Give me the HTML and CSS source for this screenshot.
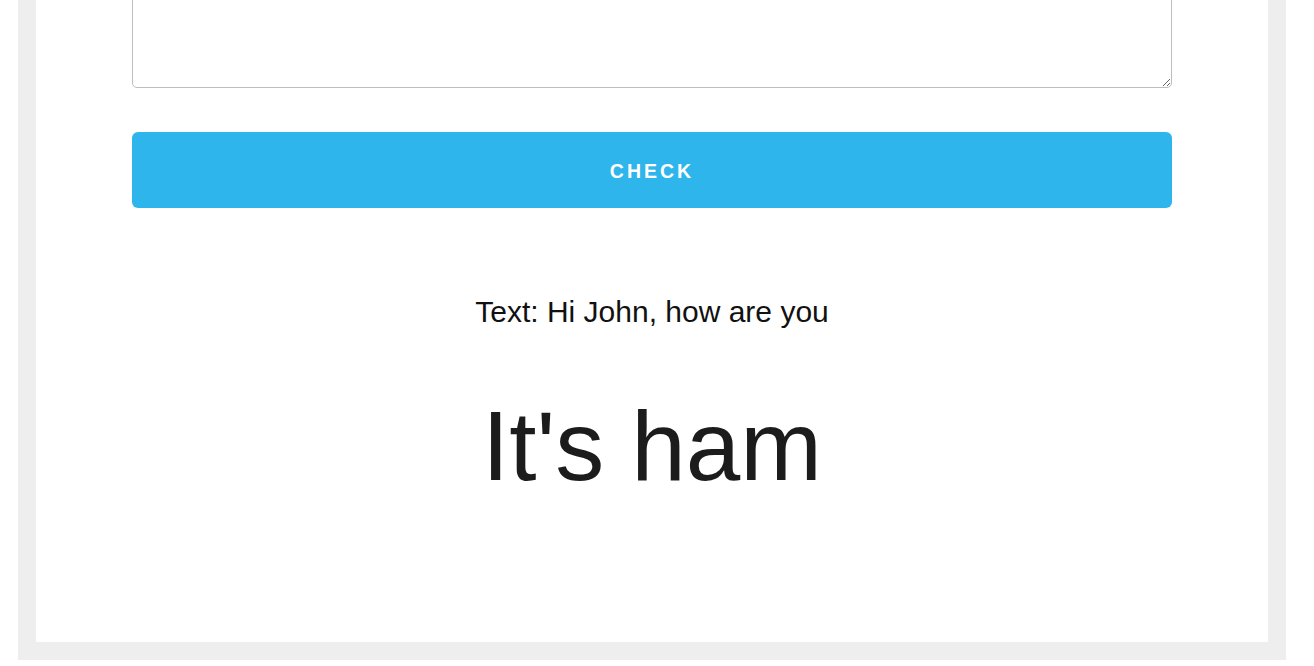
FILE: index.html
```html
<!DOCTYPE html>
<html>
<head>
<meta charset="utf-8">
<link rel="stylesheet" href="styles.css">
</head>
<body>
<div class="frame">
  <div class="content">
    <textarea class="input"></textarea>
    <button class="check">CHECK</button>
    <p class="echo">Text: Hi John, how are you</p>
    <p class="verdict">It's ham</p>
  </div>
</div>
</body>
</html>
```
FILE: styles.css
```css
html, body {
  margin: 0;
  padding: 0;
  background: #ffffff;
  overflow: hidden;
}
body {
  font-family: "Liberation Sans", Arial, Helvetica, sans-serif;
}
.frame {
  margin: -112px 28px 0 18px;
  border: 18px solid #eeeeee;
  border-top: none;
  background: #ffffff;
}
.content {
  display: flex;
  flex-direction: column;
  align-items: stretch;
  padding: 0 96px 137px;
}
.input {
  display: block;
  box-sizing: border-box;
  width: 100%;
  height: 200px;
  margin: 0;
  border: 1.5px solid #bdbdbd;
  border-radius: 5px;
  background: #ffffff;
  resize: both;
}
.check {
  margin-top: 44px;
  height: 76px;
  border: none;
  border-radius: 6px;
  background: #2eb5ec;
  color: #ffffff;
  font-family: "Liberation Sans", Arial, sans-serif;
  font-weight: bold;
  font-size: 19.5px;
  letter-spacing: 3px;
  padding: 2px 0 0 0;
}
.echo {
  margin: 86px 0 0;
  text-align: center;
  font-size: 30px;
  line-height: 36px;
  color: #111111;
}
.verdict {
  margin: 58px 0 0;
  text-align: center;
  font-size: 98px;
  line-height: 117px;
  color: #1c1c1c;
}
```
